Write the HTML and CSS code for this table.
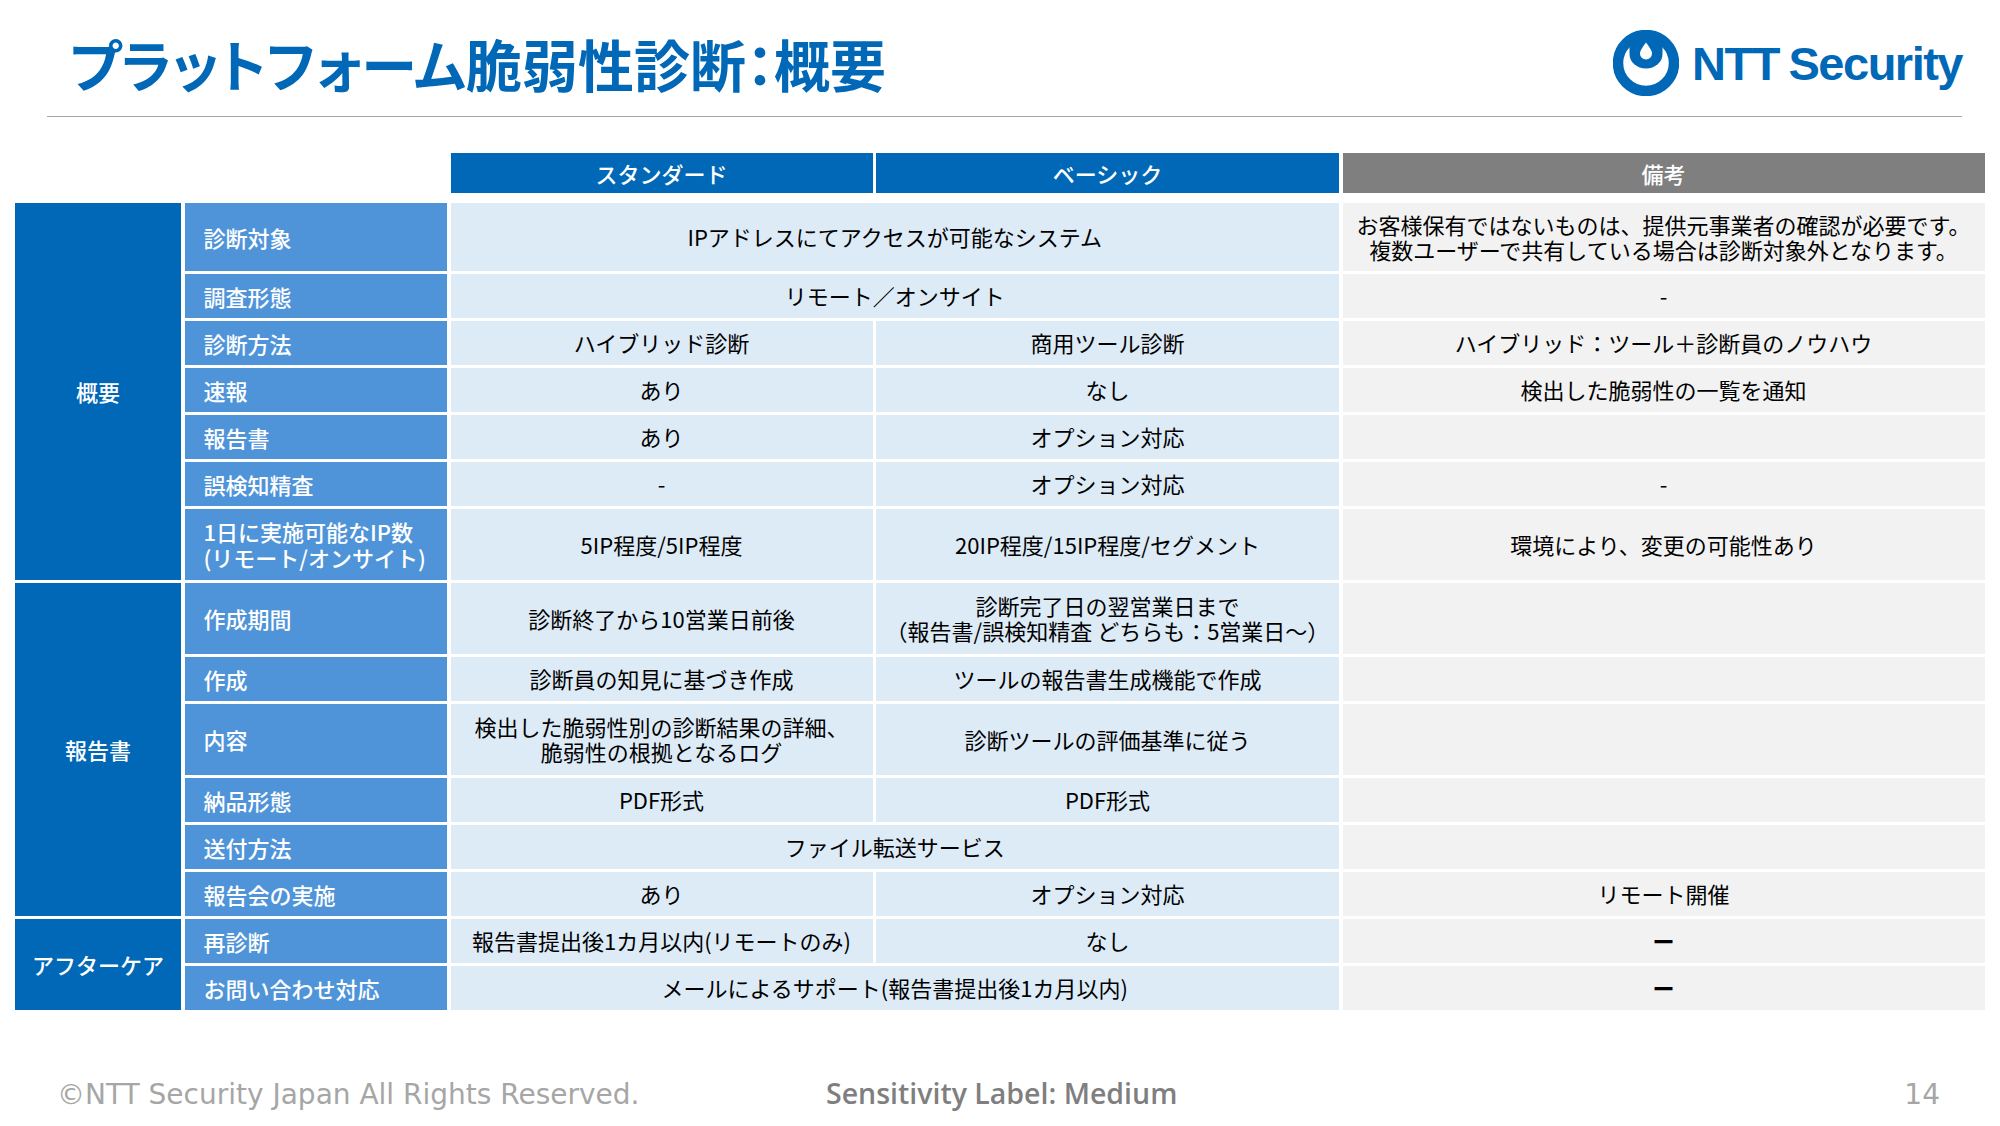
FILE: index.html
```html
<!DOCTYPE html>
<html lang="ja">
<head>
<meta charset="utf-8">
<title>プラットフォーム脆弱性診断：概要</title>
<link rel="stylesheet" href="styles.css">
</head>
<body>
<div class="page">
  <header class="top">
    <h1 class="title">プラットフォーム脆弱性診断：概要</h1>
    <div class="logo">
      <svg viewBox="0 0 66 66" aria-hidden="true">
        <circle cx="33" cy="33" r="28" fill="none" stroke="#0068b7" stroke-width="10.5"/>
        <path d="M16.5 8 H49.5 V24 A16.5 14.5 0 0 1 16.5 24 Z" fill="#0068b7"/>
        <path d="M33 12.5 C30 16.5 27 20.5 27 23.5 A6 6 0 0 0 39 23.5 C39 20.5 36 16.5 33 12.5 Z" fill="#fff"/>
      </svg>
      <span class="logo-text">NTT Security</span>
    </div>
  </header>

  <section class="table">
    <div class="thead">
      <div class="corner"></div>
      <div class="th">スタンダード</div>
      <div class="th">ベーシック</div>
      <div class="th gray">備考</div>
    </div>
    <div class="tbody">
      <div class="grp g1">概要</div>
      <div class="item">診断対象</div>
      <div class="cell span2">IPアドレスにてアクセスが可能なシステム</div>
      <div class="rem">お客様保有ではないものは、提供元事業者の確認が必要です。<br>複数ユーザーで共有している場合は診断対象外となります。</div>

      <div class="item">調査形態</div>
      <div class="cell span2">リモート／オンサイト</div>
      <div class="rem">-</div>

      <div class="item">診断方法</div>
      <div class="cell">ハイブリッド診断</div>
      <div class="cell">商用ツール診断</div>
      <div class="rem">ハイブリッド：ツール＋診断員のノウハウ</div>

      <div class="item">速報</div>
      <div class="cell">あり</div>
      <div class="cell">なし</div>
      <div class="rem">検出した脆弱性の一覧を通知</div>

      <div class="item">報告書</div>
      <div class="cell">あり</div>
      <div class="cell">オプション対応</div>
      <div class="rem"></div>

      <div class="item">誤検知精査</div>
      <div class="cell">-</div>
      <div class="cell">オプション対応</div>
      <div class="rem">-</div>

      <div class="item">1日に実施可能なIP数<br>(リモート/オンサイト)</div>
      <div class="cell">5IP程度/5IP程度</div>
      <div class="cell">20IP程度/15IP程度/セグメント</div>
      <div class="rem">環境により、変更の可能性あり</div>

      <div class="grp g2">報告書</div>
      <div class="item">作成期間</div>
      <div class="cell">診断終了から10営業日前後</div>
      <div class="cell nowrap">診断完了日の翌営業日まで<br>（報告書/誤検知精査 どちらも：5営業日～）</div>
      <div class="rem"></div>

      <div class="item">作成</div>
      <div class="cell">診断員の知見に基づき作成</div>
      <div class="cell">ツールの報告書生成機能で作成</div>
      <div class="rem"></div>

      <div class="item">内容</div>
      <div class="cell">検出した脆弱性別の診断結果の詳細、<br>脆弱性の根拠となるログ</div>
      <div class="cell">診断ツールの評価基準に従う</div>
      <div class="rem"></div>

      <div class="item">納品形態</div>
      <div class="cell">PDF形式</div>
      <div class="cell">PDF形式</div>
      <div class="rem"></div>

      <div class="item">送付方法</div>
      <div class="cell span2">ファイル転送サービス</div>
      <div class="rem"></div>

      <div class="item">報告会の実施</div>
      <div class="cell">あり</div>
      <div class="cell">オプション対応</div>
      <div class="rem">リモート開催</div>

      <div class="grp g3">アフターケア</div>
      <div class="item">再診断</div>
      <div class="cell">報告書提出後1カ月以内(リモートのみ)</div>
      <div class="cell">なし</div>
      <div class="rem"><span class="bar">ー</span></div>

      <div class="item">お問い合わせ対応</div>
      <div class="cell span2">メールによるサポート(報告書提出後1カ月以内)</div>
      <div class="rem"><span class="bar">ー</span></div>
    </div>
  </section>

  <footer class="foot">
    <span class="copy">©NTT Security Japan All Rights Reserved.</span>
    <span class="label">Sensitivity Label: Medium</span>
    <span class="pageno">14</span>
  </footer>
</div>
</body>
</html>
```

FILE: styles.css
```css
html, body {
  margin: 0;
  padding: 0;
  background: #ffffff;
}

body {
  font-family: "Noto Sans CJK JP", "Noto Sans", sans-serif;
  color: #000000;
}

.page {
  width: 2000px;
  height: 1126px;
  overflow: hidden;
}

/* ---------- header ---------- */
.top {
  display: flex;
  justify-content: space-between;
  align-items: flex-start;
  height: 116px;
  margin: 0 38px 0 47px;
  border-bottom: 1.5px solid #a6a6a6;
}

.title {
  margin: 35px 0 0 22px;
  font-size: 56px;
  line-height: 56px;
  font-weight: 700;
  color: #0068b7;
  font-feature-settings: "palt";
  letter-spacing: 0;
  white-space: nowrap;
}

.logo {
  display: flex;
  align-items: center;
  gap: 13px;
  margin-top: 30px;
}

.logo svg {
  display: block;
  width: 66px;
  height: 66px;
}

.logo-text {
  font-family: "Liberation Sans", Arial, sans-serif;
  font-weight: 700;
  font-size: 47px;
  line-height: 47px;
  letter-spacing: -1.5px;
  word-spacing: -2px;
  color: #0068b7;
  white-space: nowrap;
}

/* ---------- table ---------- */
.table {
  margin: 36px 0 0 15px;
}

.thead,
.tbody {
  display: grid;
  grid-template-columns: 166px 262.5px 422px 463px 642px;
  column-gap: 3.5px;
}

.thead {
  grid-template-rows: 40px;
  margin-bottom: 10px;
}

.corner {
  grid-column: span 2;
}

.th {
  display: flex;
  align-items: center;
  justify-content: center;
  background: #0068b7;
  color: #ffffff;
  font-size: 22px;
  font-weight: 500;
}

.th.gray {
  background: #7f7f7f;
}

.tbody {
  grid-template-rows:
    67.5px
    43.5px 43.5px 43.5px 43.5px 43.5px
    70.5px 70.5px
    43.5px
    70.5px
    43.5px 43.5px 43.5px 43.5px 43.5px;
  row-gap: 3.5px;
}

.grp {
  display: flex;
  align-items: center;
  justify-content: center;
  background: #0068b7;
  color: #ffffff;
  font-size: 22px;
  font-weight: 500;
}

.g1 { grid-row: span 7; }
.g2 { grid-row: span 6; }
.g3 { grid-row: span 2; }

.item {
  display: flex;
  align-items: center;
  padding-left: 19px;
  background: #4f94d9;
  color: #ffffff;
  font-size: 22px;
  line-height: 26px;
  font-weight: 500;
  white-space: nowrap;
}

.cell,
.rem {
  display: flex;
  align-items: center;
  justify-content: center;
  text-align: center;
  font-size: 22px;
  line-height: 25px;
  color: #000000;
}

.cell {
  background: #ddebf7;
}

.rem {
  background: #f2f2f2;
}

.span2 {
  grid-column: span 2;
}

.nowrap {
  white-space: nowrap;
}

.bar {
  font-weight: 700;
}

/* ---------- footer ---------- */
.foot {
  display: flex;
  align-items: baseline;
  margin-top: 67px;
  font-family: "DejaVu Sans", "Liberation Sans", sans-serif;
  font-size: 28px;
  line-height: 32px;
}

.copy {
  margin-left: 57px;
  width: 769px;
  color: #a6a6a6;
  white-space: nowrap;
}

.label {
  font-family: "Open Sans", "Liberation Sans", sans-serif;
  font-size: 28.5px;
  color: #7f7f7f;
  font-weight: 600;
  white-space: nowrap;
}

.pageno {
  margin-left: auto;
  margin-right: 60px;
  color: #a6a6a6;
}
```
